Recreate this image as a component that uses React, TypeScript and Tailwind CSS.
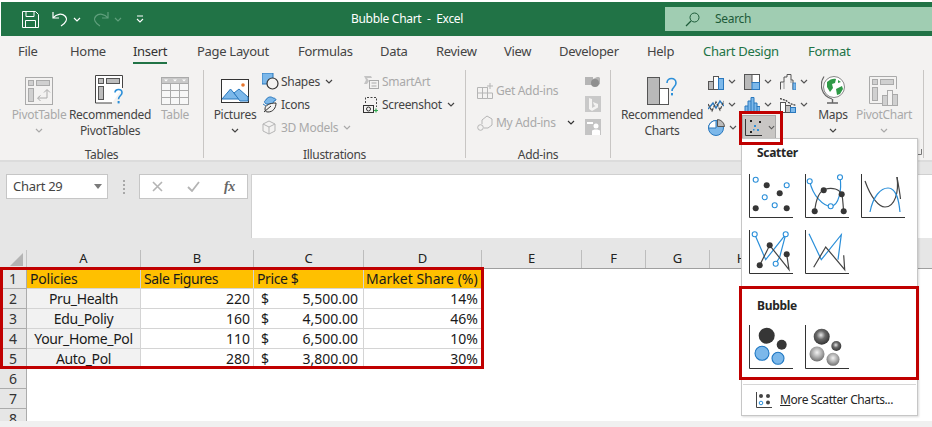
import React from 'react';

const ink = '#444444';
const off = '#a9a9a9';
const blue = '#2b8fd9';
const lblue = '#7cb8ea';

function Chev({ color = '#555', className = '' }: { color?: string; className?: string }) {
  return (
    <svg width="8" height="5" viewBox="0 0 8 5" className={className}>
      <path d="M1 1l3 3 3-3" fill="none" stroke={color} strokeWidth="1.2" />
    </svg>
  );
}

function Ico({ w = 16, h = 16, children }: { w?: number; h?: number; children: React.ReactNode }) {
  return (
    <svg width={w} height={h} viewBox={`0 0 ${w} ${h}`} className="shrink-0">
      {children}
    </svg>
  );
}

function PivotIcon() {
  return (
    <Ico w={28} h={28}>
      <rect x="0.5" y="0.5" width="27" height="27" fill="#f3f2f1" stroke="#aaa" />
      <rect x="3.5" y="3.5" width="5" height="5" fill="#d0d0d0" stroke="#aaa" />
      <rect x="11.5" y="3.5" width="13" height="5" fill="#d0d0d0" stroke="#aaa" />
      <rect x="3.5" y="11.5" width="5" height="13" fill="#d0d0d0" stroke="#aaa" />
      <path d="M13 21h9v-8M19 15.5l3-3 3 3M15.5 18.5L12.5 21l3 3" fill="none" stroke="#aaa" />
    </Ico>
  );
}

function RecPivotIcon() {
  return (
    <Ico w={30} h={32}>
      <path d="M17 28H.5V.5h27V13" fill="#fff" stroke="#444" />
      <rect x="3.5" y="3.5" width="5" height="5" fill="#bdbdbd" stroke="#555" />
      <rect x="11.5" y="3.5" width="13" height="5" fill="#bdbdbd" stroke="#555" />
      <rect x="3.5" y="11.5" width="5" height="13" fill="#bdbdbd" stroke="#555" />
      <path d="M20 17.5c0-4 7-4 7 .2 0 3-3.5 3.2-3.5 6.5" fill="none" stroke={blue} strokeWidth="1.6" />
      <rect x="22.6" y="26" width="2" height="2.4" fill={blue} />
    </Ico>
  );
}

function TableIcon() {
  return (
    <Ico w={28} h={28}>
      <rect x="0.5" y="0.5" width="27" height="27" fill="#f7f7f7" stroke="#aaa" />
      <rect x="1" y="1" width="26" height="5" fill="#c9c9c9" />
      <path d="M9.5 6v21M18.5 6v21M1 6.5h26M1 13.5h26M1 20.5h26" stroke="#aaa" fill="none" />
      <path d="M3 2.5h4l-2 2zM12 2.5h4l-2 2zM21 2.5h4l-2 2z" fill="#fff" />
    </Ico>
  );
}

function PicturesIcon() {
  return (
    <Ico w={28} h={24}>
      <rect x="0.5" y="0.5" width="27" height="23" fill="#fff" stroke="#333" />
      <path d="M1 20L9.5 10 18 20z" fill={lblue} stroke="#2a78bd" />
      <path d="M13 14l5-4 9 8v4H19z" fill={lblue} stroke="#2a78bd" />
      <circle cx="22" cy="6" r="1.8" fill="#e8762d" />
    </Ico>
  );
}

function ShapesIcon() {
  return (
    <Ico w={17} h={17}>
      <rect x="0" y="0" width="11" height="11" fill={lblue} stroke="#2a78bd" />
      <circle cx="10.5" cy="10.5" r="5.5" fill="#f3f2f1" stroke="#333" strokeWidth="1.2" />
    </Ico>
  );
}

function IconsIcon() {
  return (
    <Ico w={16} h={17}>
      <path d="M4 8c-2-2-2-3 0-4 1-3 5-4 7-2 2 0 3 1 3 2l-2 1c0 2-2 3-5 3z" fill={lblue} stroke="#2a78bd" />
      <path d="M1 8l3 2" stroke="#2a78bd" fill="none" />
      <path d="M3 13c0-4 5-6 11-6 0 5-3 9-8 9-2 0-3-1-3-3zM2 16l7-6" fill="#f3f2f1" stroke="#333" />
    </Ico>
  );
}

function CubeIcon() {
  return (
    <Ico w={14} h={15}>
      <path d="M7 1l6 3v7l-6 3-6-3V4zM1 4l6 3 6-3M7 7v7" fill="none" stroke="#b5b5b5" />
    </Ico>
  );
}

function SmartArtIcon() {
  return (
    <Ico w={16} h={14}>
      <path d="M1 1h7l1 2H4l2 3-2 3H1l2-4z" fill="#c4c4c4" />
      <rect x="6.5" y="5.5" width="9" height="8" fill="#f3f2f1" stroke="#aaa" />
      <path d="M8.5 8h5M8.5 11h5" stroke="#aaa" />
    </Ico>
  );
}

function ScreenshotIcon() {
  return (
    <Ico w={16} h={17}>
      <path d="M2.5 7V1.5h11V11" fill="none" stroke="#444" strokeDasharray="2 1.5" />
      <rect x="0.5" y="9.5" width="10" height="7" fill="#f3f2f1" stroke="#333" />
      <circle cx="5.5" cy="13" r="2" fill="none" stroke="#333" />
      <path d="M13 12.5v4M11 14.5h4" stroke="#2fa84f" strokeWidth="1.2" />
    </Ico>
  );
}

function GetAddIcon() {
  return (
    <Ico w={16} h={16}>
      <path d="M.5 4.5h10v11H.5zM.5 10h15v5.5h-5M5.5 4.5v11M10.5 10V4.5" fill="none" stroke="#b5b5b5" />
      <path d="M13 0v6M10 3h6" stroke="#b5b5b5" />
    </Ico>
  );
}

function MyAddIcon() {
  return (
    <Ico w={16} h={16}>
      <path d="M5 9V5l5-4 5 3v6l-4 3H7" fill="none" stroke="#b5b5b5" />
      <circle cx="3.5" cy="12.5" r="2.8" fill="none" stroke="#b5b5b5" />
    </Ico>
  );
}

function BarsIcon() {
  return (
    <Ico w={16} h={16}>
      <rect x="0.5" y="7.5" width="5" height="8" fill="#b9b9b9" stroke="#555" />
      <rect x="5.5" y="2.5" width="5" height="13" fill="#fff" stroke="#555" />
      <rect x="10.5" y="4.5" width="5" height="11" fill={lblue} stroke="#2a78bd" />
    </Ico>
  );
}

function TreeIcon() {
  return (
    <Ico w={16} h={16}>
      <rect x="0.5" y="0.5" width="15" height="15" fill="#b9b9b9" stroke="#555" />
      <rect x="8" y="0.5" width="7.5" height="8" fill="#fff" stroke="#555" />
      <rect x="8" y="8.5" width="7.5" height="7" fill={lblue} stroke="#2a78bd" />
    </Ico>
  );
}

function WaterIcon() {
  return (
    <Ico w={16} h={16}>
      <path d="M.5 15.5V8H4V3h3V.5h4V6h2v9.5" fill="none" stroke="#555" />
      <path d="M4 8v7M11 6v3" fill="none" stroke="#999" />
      <rect x="13" y="9" width="3" height="7" fill={lblue} stroke="#2a78bd" strokeWidth="0.8" />
    </Ico>
  );
}

function LineIcon() {
  return (
    <Ico w={16} h={16}>
      <path d="M0 12l5-6 3 5 4-7 4 5" fill="none" stroke="#2a78bd" strokeWidth="1.4" />
      <path d="M0 7l4 7 4-9 4 8 4-9" fill="none" stroke="#444" strokeWidth="1.2" strokeDasharray="3 1" />
    </Ico>
  );
}

function HistIcon() {
  return (
    <Ico w={16} h={16}>
      <path d="M1 15.5V9h3V4h3V0.5h3V6h3v3.5h3v6z" fill={lblue} stroke="#2a78bd" />
      <path d="M4 9v6M7 4v11M10 6v9M13 9v6" stroke="#2a78bd" />
    </Ico>
  );
}

function ComboIcon() {
  return (
    <Ico w={16} h={16}>
      <rect x="0.5" y="5.5" width="5" height="10" fill="#fff" stroke="#555" />
      <rect x="5.5" y="8.5" width="5" height="7" fill="#c2c2c2" stroke="#555" />
      <rect x="10.5" y="10.5" width="5" height="5" fill={lblue} stroke="#2a78bd" />
      <path d="M0 1.5l6 2 4 3 6 2" fill="none" stroke="#333" strokeDasharray="2 1" strokeWidth="1.2" />
    </Ico>
  );
}

function PieIcon() {
  return (
    <Ico w={17} h={17}>
      <circle cx="8" cy="9" r="7.5" fill={lblue} stroke="#2a78bd" />
      <path d="M8 9V1.5a7.5 7.5 0 0 0-7.5 7.5z" fill="#fff" stroke="#2a78bd" />
      <path d="M9.5 0.5a7.5 7.5 0 0 1 7 7h-7z" fill="#bbb" stroke="#555" />
    </Ico>
  );
}

function ScatterMini() {
  return (
    <Ico w={17} h={17}>
      <path d="M.5 0v16.5H17" fill="none" stroke="#333" />
      <rect x="5" y="1" width="2" height="2" fill="#222" />
      <rect x="14" y="2" width="2" height="2" fill="#222" />
      <rect x="5" y="12" width="2" height="2" fill="#222" />
      <rect x="9" y="6" width="2" height="2" fill={blue} />
      <rect x="12" y="10" width="2" height="2" fill={blue} />
      <rect x="8" y="10" width="1.5" height="1.5" fill={blue} />
    </Ico>
  );
}

function GlobeIcon() {
  return (
    <Ico w={24} h={31}>
      <path d="M3 1.5C-2 9 0 21 11 24" fill="none" stroke="#666" strokeWidth="1.2" />
      <path d="M6 28h11M11.500 24v4" stroke="#666" strokeWidth="1.4" />
      <circle cx="13" cy="12" r="10.500" fill="#fff" stroke="#888" />
      <path d="M6 7c3-3 7-4 9-3l-1 4-3 1 1 4-3 4-3-5zM15 14l6-3 1 3-3 5-3 1z" fill="#2f9a47" />
      <path d="M17 5l3 2-3 1z" fill="#2f9a47" />
    </Ico>
  );
}

function PivotChartIcon() {
  return (
    <Ico w={30} h={30}>
      <path d="M17 27.500H.5V.5h27V13" fill="#f3f2f1" stroke="#aaa" />
      <rect x="3.500" y="3.500" width="5" height="5" fill="#d0d0d0" stroke="#aaa" />
      <rect x="11.500" y="3.500" width="13" height="5" fill="#d0d0d0" stroke="#aaa" />
      <rect x="3.500" y="11.500" width="5" height="13" fill="#d0d0d0" stroke="#aaa" />
      <rect x="13.500" y="19.500" width="5" height="10" fill="#d0d0d0" stroke="#aaa" />
      <rect x="18.500" y="14.500" width="5" height="15" fill="#f3f2f1" stroke="#aaa" />
      <rect x="23.500" y="18.500" width="5" height="11" fill="#d0d0d0" stroke="#aaa" />
    </Ico>
  );
}

function RecChartsIcon() {
  return (
    <Ico w={30} h={28}>
      <rect x="0.5" y="0.5" width="12" height="27" fill="#b9b9b9" stroke="#555" />
      <rect x="12.500" y="11.500" width="9" height="16" fill="#fff" stroke="#555" />
      <path d="M20 6c0-6 9-6 9 0 0 4-4 4-4 8" fill="none" stroke={blue} strokeWidth="1.6" />
      <rect x="24" y="16" width="2" height="2.400" fill={blue} />
    </Ico>
  );
}

function LargeBtn({ icon, lines, chev, disabled }: { icon: React.ReactNode; lines: string[]; chev?: boolean; disabled?: boolean }) {
  return (
    <div className={`flex flex-col items-center whitespace-nowrap pt-[4px] leading-[16px] ${disabled ? 'text-[#a9a9a9]' : 'text-[#444444]'}`}>
      <div className="h-[33px] flex items-center justify-center">{icon}</div>
      {lines.map((l) => (
        <div key={l}>{l}</div>
      ))}
      {chev && <Chev color={disabled ? off : ink} className="mt-[5px]" />}
    </div>
  );
}

function SmallRow({ icon, label, chev, disabled }: { icon: React.ReactNode; label?: string; chev?: boolean; disabled?: boolean }) {
  return (
    <div className={`h-[23px] flex items-center whitespace-nowrap ${disabled ? 'text-[#a9a9a9]' : 'text-[#444444]'}`}>
      <span className="w-[19px] flex">{icon}</span>
      {label && <span>{label}</span>}
      {chev && <Chev color={disabled ? off : ink} className="ml-[5px]" />}
    </div>
  );
}

function ChartCell({ icon }: { icon: React.ReactNode }) {
  return (
    <div className="h-[23px] w-[36px] flex items-center gap-[4px]">
      {icon}
      <Chev />
    </div>
  );
}

function Group({ label, className, children }: { label: React.ReactNode; className: string; children: React.ReactNode }) {
  return (
    <div className={`flex flex-col h-[88px] border-r border-[#c8c6c4] shrink-0 ${className}`}>
      <div className="h-[76px] flex">{children}</div>
      <div className="h-[12px] leading-[18px] text-center text-[#444444] whitespace-nowrap">{label}</div>
    </div>
  );
}

function Thumb({ children }: { children: React.ReactNode }) {
  return (
    <svg width="44" height="44" viewBox="0 0 44 44" className="shrink-0">
      <path d="M.5 0v43.500H44" fill="none" stroke="#333" />
      {children}
    </svg>
  );
}

const Ring = ({ x, y }: { x: number; y: number }) => <circle cx={x} cy={y} r="2.500" fill="#fff" stroke={blue} strokeWidth="1.100" />;
const Dot = ({ x, y }: { x: number; y: number }) => <circle cx={x} cy={y} r="3" fill="#363636" />;

const tabs: [string, string, string][] = [
  ['File', 'w-[52px]', 'text-[#444444]'],
  ['Home', 'w-[63px]', 'text-[#444444]'],
  ['Insert', 'w-[64px]', 'text-[#333333]'],
  ['Page Layout', 'w-[101px]', 'text-[#444444]'],
  ['Formulas', 'w-[82px]', 'text-[#444444]'],
  ['Data', 'w-[56px]', 'text-[#444444]'],
  ['Review', 'w-[68px]', 'text-[#444444]'],
  ['View', 'w-[55px]', 'text-[#444444]'],
  ['Developer', 'w-[88px]', 'text-[#444444]'],
  ['Help', 'w-[56px]', 'text-[#444444]'],
  ['Chart Design', 'w-[105px]', 'text-[#217346]'],
  ['Format', 'w-[60px]', 'text-[#217346]'],
];

const cols = ['A', 'B', 'C', 'D', 'E', 'F', 'G', 'H', 'I'];
const gridCols = 'grid grid-cols-[27px_114px_113px_110px_118px_100px_64px_64px_64px_58px]';

const rows: [string, string, string, string][] = [
  ['Pru_Health', '220', '5,500.00', '14%'],
  ['Edu_Poliy', '160', '4,500.00', '46%'],
  ['Your_Home_Pol', '110', '6,500.00', '10%'],
  ['Auto_Pol', '280', '3,800.00', '30%'],
];

const cell = 'border-r border-b border-[#d4d4d4] px-[3px] leading-[19px] whitespace-nowrap overflow-hidden';
const rowHead = 'bg-[#e6e6e6] border-r border-b border-[#ababab] text-center leading-[19px] text-[#333333]';

export default function App() {
  return (
    <div className="relative w-[932px] h-[427px] overflow-hidden bg-white flex flex-col font-['Noto_Sans',sans-serif] text-[12px] tracking-[-0.3px]">
      {/* Title bar */}
      <div className="mt-[2px] ml-px h-[34px] bg-[#217346] flex items-center text-white shrink-0">
        <div className="w-[350px] h-full flex items-center pl-[21px]">
          <svg width="17" height="17" viewBox="0 0 17 17" className="shrink-0">
            <path d="M.5.5h13l3 3v13H.5z M4 .5v5h8v-5 M3.500 16.500v-7h10v7" fill="none" stroke="#fff" />
          </svg>
          <svg width="16" height="16" viewBox="0 0 16 16" className="ml-[13px] shrink-0">
            <path d="M1 1v6h6M1.500 6.500C4 3 10 2 13 5c3 3 1 7-4 10" fill="none" stroke="#fff" strokeWidth="1.200" />
          </svg>
          <Chev color="#fff" className="ml-[5px]" />
          <svg width="16" height="16" viewBox="0 0 16 16" className="ml-[12px] shrink-0">
            <path d="M15 1v6H9M14.500 6.500C12 3 6 2 3 5c-3 3-1 7 4 10" fill="none" stroke="#5f9f7c" strokeWidth="1.200" />
          </svg>
          <Chev color="#5f9f7c" className="ml-[5px]" />
          <svg width="8" height="8" viewBox="0 0 8 8" className="ml-[14px] shrink-0">
            <path d="M1 1h6M1 4l3 3 3-3" fill="none" stroke="#fff" strokeWidth="1.100" />
          </svg>
        </div>
        <div className="w-[314px] whitespace-nowrap">Bubble Chart&nbsp; - &nbsp;Excel</div>
        <div className="flex-1 h-[24px] bg-[#a0cdb2] flex items-center pl-[20px] text-[#1d5b39]">
          <svg width="15" height="15" viewBox="0 0 15 15" className="shrink-0">
            <circle cx="9.500" cy="5.500" r="4.500" fill="none" stroke="#1d5b39" />
            <path d="M6 9l-5 5" stroke="#1d5b39" strokeWidth="1.200" />
          </svg>
          <span className="ml-[15px]">Search</span>
        </div>
      </div>

      {/* Tabs */}
      <div className="h-[34px] bg-[#f3f2f1] flex pl-[18px] shrink-0 text-[13px]">
        {tabs.map(([t, w, c]) => (
          <div key={t} className={`${w} ${c} pt-[6px] shrink-0 whitespace-nowrap`}>
            <span className={`inline-block leading-[18px] pb-[2px] ${t === 'Insert' ? 'border-b-2 border-[#217346]' : ''}`}>{t}</span>
          </div>
        ))}
      </div>

      {/* Ribbon */}
      <div className="h-[92px] bg-[#f3f2f1] border-b-2 border-[#dcdcdc] flex shrink-0">
        <Group label="Tables" className="w-[204px]">
          <div className="w-[70px] flex justify-center pl-[8px]">
            <LargeBtn icon={<PivotIcon />} lines={['PivotTable']} chev disabled />
          </div>
          <div className="w-[80px] flex justify-center">
            <LargeBtn icon={<RecPivotIcon />} lines={['Recommended', 'PivotTables']} />
          </div>
          <div className="w-[50px] flex justify-center">
            <LargeBtn icon={<TableIcon />} lines={['Table']} disabled />
          </div>
        </Group>
        <Group label="Illustrations" className="w-[262px]">
          <div className="w-[58px] flex justify-center pl-[4px]">
            <LargeBtn icon={<PicturesIcon />} lines={['Pictures']} chev />
          </div>
          <div className="w-[101px] flex flex-col">
            <SmallRow icon={<ShapesIcon />} label="Shapes" chev />
            <SmallRow icon={<IconsIcon />} label="Icons" />
            <SmallRow icon={<CubeIcon />} label="3D Models" chev disabled />
          </div>
          <div className="flex flex-col">
            <SmallRow icon={<SmartArtIcon />} label="SmartArt" disabled />
            <SmallRow icon={<ScreenshotIcon />} label="Screenshot" chev />
          </div>
        </Group>
        <Group label="Add-ins" className="w-[145px]">
          <div className="w-[119px] pl-[11px] pt-[9px] flex flex-col gap-[9px] text-[#a9a9a9]">
            <div className="h-[23px] flex items-center whitespace-nowrap">
              <span className="w-[19px] flex">
                <GetAddIcon />
              </span>
              Get Add-ins
            </div>
            <div className="h-[23px] flex items-center whitespace-nowrap">
              <span className="w-[19px] flex">
                <MyAddIcon />
              </span>
              My Add-ins
              <Chev color="#333" className="ml-[11px]" />
            </div>
          </div>
          <div className="flex flex-col pt-[4px] gap-[7px]">
            <svg width="15" height="15" viewBox="0 0 15 15">
              <path d="M0 3h8v8H0zM8 5l4-2h2l1 1v6l-2 1-5-1z" fill="#b5b5b5" />
              <circle cx="10" cy="9" r="4" fill="#8f8f8f" />
            </svg>
            <svg width="16" height="16" viewBox="0 0 16 16">
              <rect width="16" height="16" fill="#c9c9c9" />
              <path d="M4 2v11l3 2 6-3.500V8L8 6l1 3 1.500 1L7 12V3z" fill="#f3f2f1" />
            </svg>
            <svg width="16" height="16" viewBox="0 0 16 16">
              <rect width="16" height="16" fill="#c4c4c4" />
              <rect x="2" y="3" width="6" height="2" fill="#fff" />
              <circle cx="11" cy="7" r="2.500" fill="#fff" />
              <path d="M7 16v-4c0-2 8-2 8 0v4z" fill="#fff" />
            </svg>
          </div>
        </Group>
        <Group
          label={
            <div className="flex justify-end pr-[1px] pt-[3px]">
              <svg width="6" height="6" viewBox="0 0 6 6">
                <path d="M.5 0v.5M5.500 5.500H0M5.500 5.500V0" fill="none" stroke="#777" />
              </svg>
            </div>
          }
          className="w-[313px]"
        >
          <div className="w-[97px] flex justify-center pl-[5px]">
            <LargeBtn icon={<RecChartsIcon />} lines={['Recommended', 'Charts']} />
          </div>
          <div className="w-[36px] flex flex-col">
            <ChartCell icon={<BarsIcon />} />
            <ChartCell icon={<LineIcon />} />
            <ChartCell icon={<PieIcon />} />
          </div>
          <div className="w-[36px] flex flex-col">
            <ChartCell icon={<TreeIcon />} />
            <ChartCell icon={<HistIcon />} />
            <div className="h-[24px] w-[34px] -ml-[2px] mt-[-1px] bg-[#c8c6c4] border border-[#a8a8a8] flex items-center gap-[6px] pl-[2px]">
              <ScatterMini />
              <Chev />
            </div>
          </div>
          <div className="w-[38px] flex flex-col">
            <ChartCell icon={<WaterIcon />} />
            <ChartCell icon={<ComboIcon />} />
          </div>
          <div className="w-[30px] flex justify-center">
            <LargeBtn icon={<GlobeIcon />} lines={['Maps']} chev />
          </div>
          <div className="w-[72px] flex justify-center">
            <LargeBtn icon={<PivotChartIcon />} lines={['PivotChart']} chev disabled />
          </div>
        </Group>
      </div>

      {/* Formula bar */}
      <div className="h-[88px] bg-[#e6e6e6] shrink-0 flex pt-[12px] pl-[6px] text-[13px]">
        <div className="w-[102px] h-[25px] bg-white border border-[#c6c6c6] flex items-center justify-between pl-[6px] pr-[5px] text-[#444444]">
          Chart 29
          <svg width="8" height="5" viewBox="0 0 8 5">
            <path d="M0 0h8L4 5z" fill="#7a7a7a" />
          </svg>
        </div>
        <div className="w-[31px] h-[25px] flex flex-col items-center justify-center gap-[2px]">
          <span className="w-[2px] h-[2px] bg-[#a8a8a8]" />
          <span className="w-[2px] h-[2px] bg-[#a8a8a8]" />
          <span className="w-[2px] h-[2px] bg-[#a8a8a8]" />
          <span className="w-[2px] h-[2px] bg-[#a8a8a8]" />
        </div>
        <div className="w-[109px] h-[25px] bg-white border border-[#c6c6c6] flex items-center pl-[12px] gap-[24px]">
          <svg width="11" height="11" viewBox="0 0 11 11">
            <path d="M1 1l9 9M10 1l-9 9" stroke="#b4b4b4" strokeWidth="1.600" />
          </svg>
          <svg width="13" height="11" viewBox="0 0 13 11">
            <path d="M1 6l4 4 7-9" fill="none" stroke="#b4b4b4" strokeWidth="1.800" />
          </svg>
          <span className="font-['Liberation_Serif',serif] italic font-bold text-[#666666] text-[14px]">fx</span>
        </div>
        <div className="ml-[3px] flex-1 h-[64px] bg-white border-l border-t border-[#d0d0d0]" />
      </div>

      {/* Grid */}
      <div className="flex-1 min-h-0 bg-white overflow-hidden flex flex-col text-[14px] tracking-normal text-[#1a1a1a]">
        <div className={`${gridCols} h-[19px] bg-[#e6e6e6] border-b border-[#9f9f9f] shrink-0`}>
          <div className="border-r border-[#c4c4c4] flex items-end justify-end pr-[3px] pb-[2px]">
            <svg width="13" height="13" viewBox="0 0 13 13">
              <path d="M13 0v13H0z" fill="#b4b4b4" />
            </svg>
          </div>
          {cols.map((c) => (
            <div key={c} className="border-r border-[#bdbdbd] text-center leading-[17px] text-[13px] text-[#222222]">
              {c}
            </div>
          ))}
        </div>
        <div className={`${gridCols} auto-rows-[20px]`}>
          <div className={rowHead}>1</div>
          <div className={`${cell} bg-[#ffc000] tracking-[-0.2px]`}>Policies</div>
          <div className={`${cell} bg-[#ffc000] tracking-[-0.4px]`}>Sale Figures</div>
          <div className={`${cell} bg-[#ffc000] tracking-[-0.4px]`}>Price $</div>
          <div className={`${cell} bg-[#ffc000] pl-[2px]`}>Market Share (%)</div>
          <div className="col-span-5" />
          {rows.map((r, i) => (
            <React.Fragment key={r[0]}>
              <div className={rowHead}>{i + 2}</div>
              <div className={`${cell} bg-[#f2f2f2] text-center tracking-[-0.35px]`}>{r[0]}</div>
              <div className={`${cell} text-right`}>{r[1]}</div>
              <div className={`${cell} flex justify-between pl-[7px] pr-[5px]`}>
                <span>$</span>
                <span>{r[2]}</span>
              </div>
              <div className={`${cell} text-right`}>{r[3]}</div>
              <div className="col-span-5" />
            </React.Fragment>
          ))}
          {[6, 7, 8].map((n) => (
            <React.Fragment key={n}>
              <div className={rowHead}>{n}</div>
              <div className="col-span-9" />
            </React.Fragment>
          ))}
        </div>
      </div>
      <div className="h-[6px] bg-[#f0f0f0] shrink-0" />

      {/* Red highlight on the data */}
      <div className="absolute left-0 top-[267px] w-[484px] h-[102px] border-[3px] border-[#c00000] pointer-events-none" />
      <div className="absolute left-[739px] top-[111px] w-[44px] h-[34px] border-[3px] border-[#c00000] pointer-events-none z-20" />

      {/* Scatter menu */}
      <div className="absolute left-[741px] top-[138px] w-[177px] h-[278px] bg-white border border-[#c6c6c6] shadow-[1px_1px_2px_rgba(0,0,0,0.15)] z-10 flex flex-col text-[#262626]">
        <div className="pl-[15px] pt-[5px] h-[35px] font-bold leading-[18px]">Scatter</div>
        <div className="pl-[7px] flex gap-[12px]">
          <Thumb>
            <Ring x={6.7} y={5.7} />
            <Ring x={37.700} y={11.300} />
            <Ring x={15.700} y={23.300} />
            <Ring x={25.700} y={31.300} />
            <Dot x={17.700} y={11.300} />
            <Dot x={30.700} y={19.300} />
            <Dot x={6.7} y={34.300} />
            <Dot x={37.700} y={34.300} />
          </Thumb>
          <Thumb>
            <path d="M4.700 7.300C8 22 18 32 25.700 32.300 34 32 37 15 35 3.300" fill="none" stroke={blue} strokeWidth="1.200" />
            <path d="M9.700 37.300C11 25 15 17 20 15.300 27 13 35 15 37 21 38 26 38 32 38.700 37.300" fill="none" stroke="#444" strokeWidth="1.200" />
            <Ring x={4.700} y={7.300} />
            <Ring x={35} y={3.300} />
            <Ring x={25.700} y={32.300} />
            <Dot x={18.700} y={16.300} />
            <Dot x={36.700} y={20.300} />
            <Dot x={9.700} y={37.300} />
            <Dot x={38.700} y={37.300} />
          </Thumb>
          <Thumb>
            <path d="M4 7C10 24 18 33 24 33 34 33 38 18 36 3" fill="none" stroke="#444" strokeWidth="1.200" />
            <path d="M36 3C38 14 39 20 39.500 25" fill="none" stroke="#444" strokeWidth="1.200" />
            <path d="M9 38C12 22 20 14 27 14 36 14 38 28 39 38" fill="none" stroke={blue} strokeWidth="1.200" />
          </Thumb>
        </div>
        <div className="pl-[7px] pt-[12px] flex gap-[12px]">
          <Thumb>
            <polyline points="5.700,4.300 16.700,29.700 36.700,4.300 30.700,27 26.700,33.700" fill="none" stroke={blue} strokeWidth="1.200" />
            <polyline points="10.700,35.300 20.700,15.300 40,39.700 37.700,24.300" fill="none" stroke="#444" strokeWidth="1.200" />
            <Ring x={5.700} y={4.300} />
            <Ring x={36.700} y={4.300} />
            <Ring x={26.700} y={33.700} />
            <Dot x={20.700} y={15.300} />
            <Dot x={37.700} y={24.300} />
            <Dot x={10.700} y={35.300} />
          </Thumb>
          <Thumb>
            <polyline points="4,3.700 16.300,29.700 36.300,4.700 33,29.700" fill="none" stroke={blue} strokeWidth="1.200" />
            <polyline points="8.700,37.300 20.700,17 39.700,39.700 38.700,25.300" fill="none" stroke="#444" strokeWidth="1.200" />
          </Thumb>
        </div>
        <div className="pl-[15px] pt-[23px] h-[51px] font-bold leading-[18px]">Bubble</div>
        <div className="pl-[7px] flex gap-[12px]">
          <Thumb>
            <circle cx="17.700" cy="10.700" r="8" fill="#363636" />
            <circle cx="32.700" cy="19.700" r="5" fill="#363636" />
            <circle cx="13" cy="28.300" r="7" fill={lblue} stroke="#1f77c2" strokeWidth="1.100" />
            <circle cx="29" cy="33.300" r="6" fill={lblue} stroke="#1f77c2" strokeWidth="1.100" />
          </Thumb>
          <Thumb>
            <defs>
              <radialGradient id="bd" cx="0.45" cy="0.4" r="0.6">
                <stop offset="0" stopColor="#e8e8e8" />
                <stop offset="0.45" stopColor="#6a6a6a" />
                <stop offset="1" stopColor="#333" />
              </radialGradient>
              <radialGradient id="bl" cx="0.5" cy="0.4" r="0.6">
                <stop offset="0" stopColor="#f2f2f2" />
                <stop offset="0.6" stopColor="#a5a5a5" />
                <stop offset="1" stopColor="#6e6e6e" />
              </radialGradient>
            </defs>
            <circle cx="16.700" cy="11.700" r="8" fill="url(#bd)" />
            <circle cx="31.300" cy="21" r="5" fill="url(#bd)" />
            <circle cx="12" cy="29" r="7.500" fill="url(#bl)" />
            <circle cx="28" cy="34.300" r="6.500" fill="url(#bl)" />
          </Thumb>
        </div>
        <div className="mx-[1px] mt-[15px] border-t border-[#d6d6d6] flex items-center h-[30px] pl-[13px] gap-[8px] tracking-[-0.4px]">
          <svg width="16" height="16" viewBox="0 0 16 16" className="shrink-0">
            <path d="M.5 0v15.500H16" fill="none" stroke="#444" />
            <circle cx="5" cy="4" r="2" fill="#444" />
            <circle cx="12" cy="4" r="2" fill="#444" />
            <circle cx="12" cy="10.500" r="2" fill="#444" />
            <circle cx="5" cy="11" r="1.800" fill="#fff" stroke={blue} />
          </svg>
          <span className="whitespace-nowrap">
            <span className="underline">M</span>ore Scatter Charts...
          </span>
        </div>
      </div>

      {/* Bubble highlight */}
      <div className="absolute left-[739px] top-[286px] w-[180px] h-[94px] border-[3px] border-[#c00000] pointer-events-none z-20" />
    </div>
  );
}
